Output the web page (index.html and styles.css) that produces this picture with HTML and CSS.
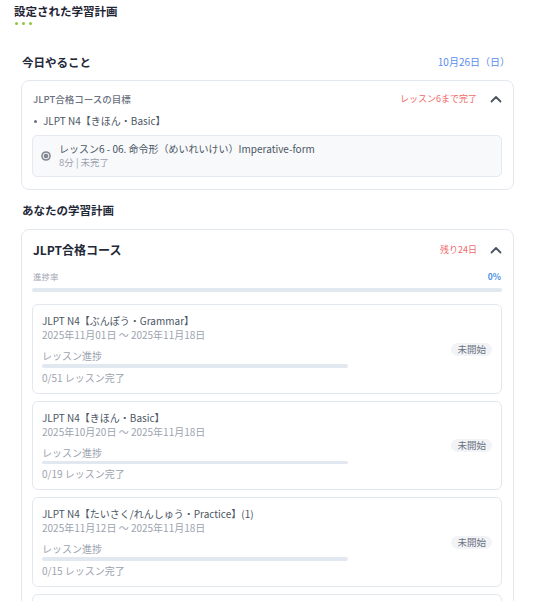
FILE: index.html
```html
<!DOCTYPE html>
<html lang="ja">
<head>
<meta charset="utf-8">
<title>設定された学習計画</title>
<link rel="stylesheet" href="styles.css">
</head>
<body>
<div class="page">
  <h1 class="page-title">設定された学習計画</h1>
  <div class="dots"><span></span><span></span><span></span></div>

  <section class="section today">
    <div class="section-head">
      <h2 class="heading">今日やること</h2>
      <span class="date">10月26日（日）</span>
    </div>
    <div class="card goal-card">
      <div class="card-head">
        <span class="goal-label">JLPT合格コースの目標</span>
        <div class="head-right">
          <span class="red">レッスン6まで完了</span>
          <svg class="chev" width="12" height="8" viewBox="0 0 12 8"><path d="M1.5 6.5 L6 2 L10.5 6.5" fill="none" stroke="#4b5563" stroke-width="1.8" stroke-linecap="round" stroke-linejoin="round"/></svg>
        </div>
      </div>
      <ul class="bullets">
        <li>JLPT N4【きほん・Basic】</li>
      </ul>
      <div class="lesson">
        <svg class="lesson-icon" width="10" height="10" viewBox="0 0 10 10"><circle cx="5" cy="5" r="4.8" fill="#80868f"/><circle cx="5" cy="5" r="3.3" fill="#e6e8ec"/><circle cx="5" cy="5" r="2.2" fill="#80868f"/></svg>
        <div class="lesson-text">
          <div class="lesson-title">レッスン6 - 06. 命令形（めいれいけい）Imperative-form</div>
          <div class="lesson-sub">8分 | 未完了</div>
        </div>
      </div>
    </div>
  </section>

  <section class="section plan">
    <h2 class="heading plan-heading">あなたの学習計画</h2>
    <div class="card course-card">
      <div class="course-head">
        <span class="course-title">JLPT合格コース</span>
        <div class="head-right">
          <span class="red">残り24日</span>
          <svg class="chev" width="12" height="8" viewBox="0 0 12 8"><path d="M1.5 6.5 L6 2 L10.5 6.5" fill="none" stroke="#4b5563" stroke-width="1.8" stroke-linecap="round" stroke-linejoin="round"/></svg>
        </div>
      </div>
      <div class="rate-row">
        <span class="rate-label">進捗率</span>
        <span class="rate-value">0%</span>
      </div>
      <div class="bar"><div class="bar-fill" style="width:0%"></div></div>

      <div class="subcards">
        <div class="subcard">
          <div class="sub-main">
            <div class="sub-title">JLPT N4【ぶんぽう・Grammar】</div>
            <div class="sub-date">2025年11月01日 〜 2025年11月18日</div>
            <div class="sub-label">レッスン進捗</div>
            <div class="sub-bar"></div>
            <div class="sub-done">0/51 レッスン完了</div>
          </div>
          <span class="badge">未開始</span>
        </div>
        <div class="subcard">
          <div class="sub-main">
            <div class="sub-title">JLPT N4【きほん・Basic】</div>
            <div class="sub-date">2025年10月20日 〜 2025年11月18日</div>
            <div class="sub-label">レッスン進捗</div>
            <div class="sub-bar"></div>
            <div class="sub-done">0/19 レッスン完了</div>
          </div>
          <span class="badge">未開始</span>
        </div>
        <div class="subcard">
          <div class="sub-main">
            <div class="sub-title">JLPT N4【たいさく/れんしゅう・Practice】(1)</div>
            <div class="sub-date">2025年11月12日 〜 2025年11月18日</div>
            <div class="sub-label">レッスン進捗</div>
            <div class="sub-bar"></div>
            <div class="sub-done">0/15 レッスン完了</div>
          </div>
          <span class="badge">未開始</span>
        </div>
        <div class="subcard">
          <div class="sub-main">
            <div class="sub-title">JLPT N4【たいさく/れんしゅう・Practice】(2)</div>
            <div class="sub-date">2025年11月12日 〜 2025年11月18日</div>
            <div class="sub-label">レッスン進捗</div>
            <div class="sub-bar"></div>
            <div class="sub-done">0/15 レッスン完了</div>
          </div>
          <span class="badge">未開始</span>
        </div>
      </div>
    </div>
  </section>
</div>
</body>
</html>
```

FILE: styles.css
```css
* { box-sizing: border-box; }
html, body { margin: 0; padding: 0; background: #ffffff; }
body {
  font-family: "Noto Sans CJK JP", "Noto Sans", sans-serif;
  color: #4b5563;
  font-size: 10px;
  overflow: hidden;
}
.page { padding: 4px 33px 0 14px; }
.page-title {
  margin: 0;
  font-size: 11.5px;
  line-height: 14px;
  font-weight: 700;
  color: #1e2433;
}
.dots { display: flex; gap: 4px; margin-top: 4px; height: 3px; padding-left: 1px; }
.dots span { width: 3px; height: 3px; border-radius: 50%; background: #8cc63f; }

.section { padding-left: 7px; }
.today { margin-top: 30px; }
.section-head { display: flex; justify-content: space-between; align-items: center; padding-left: 1px; }
.heading {
  margin: 0;
  font-size: 11.5px;
  line-height: 14px;
  font-weight: 700;
  color: #1f2937;
}
.date { font-size: 10px; line-height: 14px; color: #5b8def; padding-right: 4px; }

.card {
  border: 1px solid #e3e8ef;
  border-radius: 8px;
  background: #fff;
}
.goal-card { margin-top: 11px; padding: 11px 11px 12px 11px; }
.card-head { display: flex; justify-content: space-between; align-items: center; height: 14px; }
.goal-label { font-size: 9.5px; font-weight: 500; color: #6b7280; line-height: 14px; }
.head-right { display: flex; align-items: center; gap: 13px; }
.red { color: #f06a6a; font-size: 9px; line-height: 14px; }
.chev { display: block; }

.bullets { margin: 8px 0 0 0; padding: 0 0 0 10px; list-style: none; }
.bullets li { position: relative; line-height: 14px; font-size: 10px; color: #4b5563; }
.bullets li::before {
  content: "";
  position: absolute;
  left: -9px; top: 6px;
  width: 3px; height: 3px;
  background: #6b7280;
  border-radius: 50%;
}

.lesson {
  margin: 7px 0 0 -1px;
  border: 1px solid #e5e9f0;
  border-radius: 5px;
  background: #f8f9fb;
  padding: 6px 10px 7px 8px;
  display: flex;
  align-items: center;
  gap: 8px;
}
.lesson-icon { display: block; flex: none; }
.lesson-title { font-size: 10px; line-height: 14px; color: #4b5563; }
.lesson-sub { font-size: 9.5px; line-height: 13px; color: #9ca3af; }

.plan-heading { margin-top: 13px; padding-left: 1px; }
.course-card { margin-top: 12px; padding: 12px 11px 0 11px; height: 400px; }
.course-head { display: flex; justify-content: space-between; align-items: center; height: 16px; }
.course-title { font-size: 12px; font-weight: 700; line-height: 16px; color: #1f2937; }
.rate-row { display: flex; justify-content: space-between; align-items: center; margin-top: 11px; line-height: 14px; }
.rate-label { font-size: 8.5px; color: #9ca3af; }
.rate-value { font-size: 8.5px; font-weight: 700; color: #4a90e2; padding-right: 1px; }
.bar { margin-top: 5px; height: 4px; border-radius: 2px; background: #e2e8f0; margin-left: -1px; overflow: hidden; }
.bar-fill { height: 100%; background: #3b82f6; }

.subcards { margin: 12px 0 0 -1px; display: flex; flex-direction: column; gap: 7px; }
.subcard {
  border: 1px solid #e3e8ef;
  border-radius: 6px;
  padding: 9px 9px 8px 9px;
  display: flex;
  align-items: center;
  justify-content: space-between;
}
.sub-main { width: 306px; }
.sub-title { font-size: 10px; line-height: 14px; color: #4b5563; }
.sub-date { font-size: 10px; line-height: 14px; color: #9ca3af; }
.sub-label { font-size: 10px; line-height: 14px; color: #9ca3af; margin-top: 7px; }
.sub-bar { height: 3.5px; border-radius: 2px; background: #e2e8f0; margin-top: 1px; }
.sub-done { font-size: 10px; line-height: 14px; color: #9ca3af; margin-top: 3px; }
.badge {
  background: #f1f3f6;
  color: #6b7280;
  font-size: 9.5px;
  line-height: 13px;
  padding: 0 6px;
  border-radius: 7px;
}
```
